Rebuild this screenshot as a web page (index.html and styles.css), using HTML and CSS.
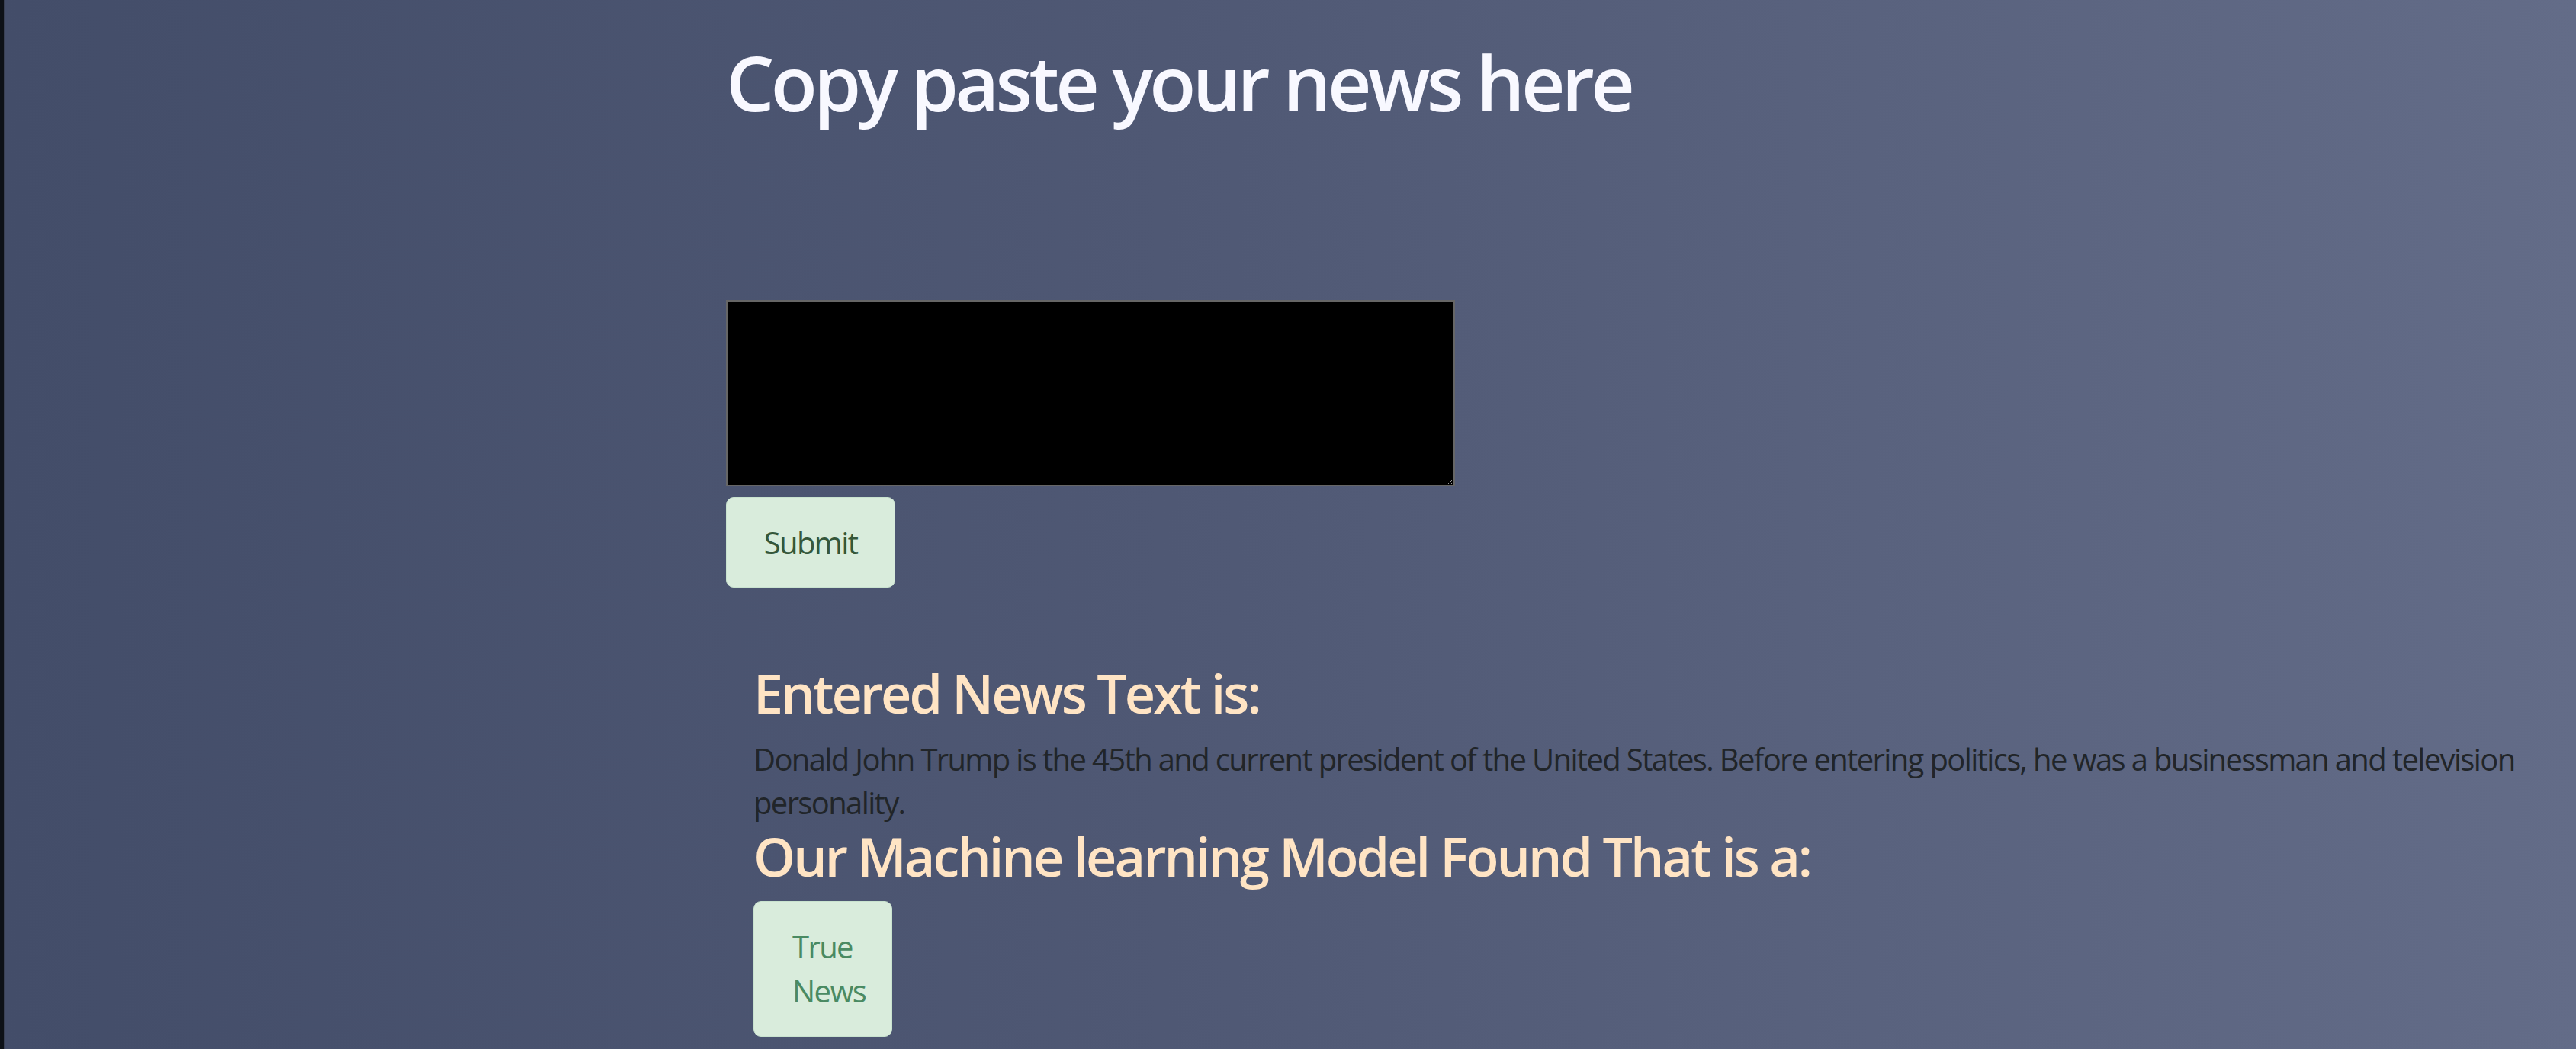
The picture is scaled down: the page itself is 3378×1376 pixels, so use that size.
FILE: index.html
```html
<!DOCTYPE html>
<html lang="en">
<head>
<meta charset="utf-8">
<title>Fake News Detector</title>
<link rel="stylesheet" href="styles.css">
</head>
<body>
<div class="page">
  <main class="main">
    <h1 class="title">Copy paste your news here</h1>
    <form class="news-form">
      <textarea class="news-input" name="news"></textarea>
      <button type="button" class="submit-btn">Submit</button>
    </form>
    <section class="result">
      <h3 class="result-heading">Entered News Text is:</h3>
      <p class="result-text">Donald John Trump is the 45th and current president of the United States. Before entering politics, he was a businessman and television personality.</p>
      <h3 class="result-heading">Our Machine learning Model Found That is a:</h3>
      <div class="verdict">True News</div>
    </section>
  </main>
</div>
</body>
</html>
```

FILE: styles.css
```css
html, body {
  margin: 0;
  padding: 0;
  height: 100%;
}

body {
  border-left: 5px solid #0d1117;
  background: #0d1117;
  font-family: "Open Sans", "Noto Sans", sans-serif;
  color: #212529;
  overflow: hidden;
}

.page {
  min-height: 100%;
  border-left: 2px solid #3a4155;
  background: linear-gradient(to right, #434d69 0%, #4f5874 45%, #636c88 100%);
}

.main {
  padding: 47px 40px 0 945px;
}

.title {
  margin: 0 0 227px 0;
  font-size: 100px;
  line-height: 120px;
  font-weight: 600;
  letter-spacing: -0.047em;
  color: #f8f8ff;
}

.news-form {
  display: flex;
  flex-direction: column;
  align-items: flex-start;
  gap: 14px;
}

.news-input {
  box-sizing: border-box;
  width: 956px;
  height: 244px;
  margin: 0;
  background: #000;
  border: 2px solid #666666;
  resize: both;
  color: #fff;
}

.submit-btn {
  box-sizing: border-box;
  width: 222px;
  height: 119px;
  margin: 0;
  padding: 0;
  border: 1px solid #c9e3cf;
  border-radius: 10px;
  background: #d9ecdc;
  color: #35573a;
  font-family: inherit;
  font-size: 40px;
  letter-spacing: -0.04em;
}

.result {
  padding-left: 36px;
  margin-top: 96px;
}

.result-heading {
  margin: 0;
  font-size: 70px;
  line-height: 84px;
  font-weight: 600;
  letter-spacing: -0.042em;
  color: #ffe4c4;
}

.result-text {
  margin: 16px 0 0 0;
  font-size: 40px;
  line-height: 57px;
  letter-spacing: -0.041em;
}

.verdict {
  box-sizing: border-box;
  width: 182px;
  margin-top: 17px;
  padding: 30px 50px;
  border: 1px solid #c9e3cf;
  border-radius: 10px;
  background: #d9ecdc;
  color: #4a8a62;
  font-size: 40px;
  line-height: 58px;
  letter-spacing: -0.04em;
}
```
